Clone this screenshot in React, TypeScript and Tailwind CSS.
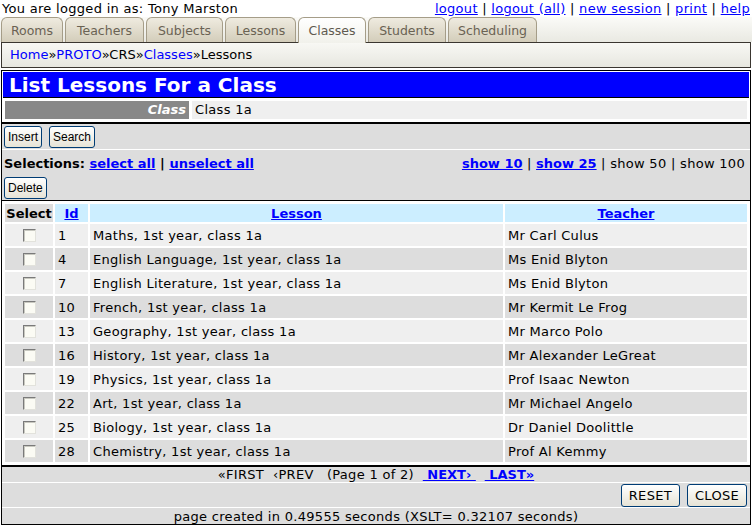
import React from "react";

const tabs = [
  { t: "Rooms", w: "w-[62px]" },
  { t: "Teachers", w: "w-[79px]" },
  { t: "Subjects", w: "w-[77px]" },
  { t: "Lessons", w: "w-[71px]" },
  { t: "Classes", w: "w-[68px]" },
  { t: "Students", w: "w-[78px]" },
  { t: "Scheduling", w: "w-[89px]" },
];

const rows = [
  { id: 1, lesson: "Maths, 1st year, class 1a", teacher: "Mr Carl Culus" },
  { id: 4, lesson: "English Language, 1st year, class 1a", teacher: "Ms Enid Blyton" },
  { id: 7, lesson: "English Literature, 1st year, class 1a", teacher: "Ms Enid Blyton" },
  { id: 10, lesson: "French, 1st year, class 1a", teacher: "Mr Kermit Le Frog" },
  { id: 13, lesson: "Geography, 1st year, class 1a", teacher: "Mr Marco Polo" },
  { id: 16, lesson: "History, 1st year, class 1a", teacher: "Mr Alexander LeGreat" },
  { id: 19, lesson: "Physics, 1st year, class 1a", teacher: "Prof Isaac Newton" },
  { id: 22, lesson: "Art, 1st year, class 1a", teacher: "Mr Michael Angelo" },
  { id: 25, lesson: "Biology, 1st year, class 1a", teacher: "Dr Daniel Doolittle" },
  { id: 28, lesson: "Chemistry, 1st year, class 1a", teacher: "Prof Al Kemmy" },
];

function XpButton({ children, wide }: { children: React.ReactNode; wide?: boolean }) {
  return (
    <button
      className={
        wide
          ? "h-[23px] rounded-[3px] border border-[#003c74] bg-gradient-to-b from-white to-[#e6e3d6] px-[7px] text-[13px] text-black leading-none"
          : "h-[22px] rounded-[3px] border border-[#003c74] bg-gradient-to-b from-white to-[#e6e3d6] px-[3px] font-['Liberation_Sans',sans-serif] text-[12px] tracking-normal text-black leading-none"
      }
    >
      {children}
    </button>
  );
}

function Checkbox() {
  return (
    <div className="mx-auto h-[13px] w-[13px] border border-[#7a7a7a] border-b-[#e2e2dc] border-r-[#e2e2dc] bg-[#fbfbf4] shadow-[inset_1px_1px_0_#c8c8c0]" />
  );
}

const link = "text-[#0000ff] underline";
const boldLink = "font-bold tracking-normal text-[#0000ff] underline";

export default function App() {
  return (
    <div className="h-[527px] w-[752px] overflow-hidden bg-white font-['DejaVu_Sans',sans-serif] text-[13px] tracking-[0.3px] text-black">
      {/* top line */}
      <div className="flex h-[17px] items-center justify-between pl-[2px] pr-[2px] leading-none">
        <span>You are logged in as: Tony Marston</span>
        <span>
          <a className={link}>logout</a> | <a className={link}>logout (all)</a> | <a className={link}>new session</a> |{" "}
          <a className={link}>print</a> | <a className={link}>help</a>
        </span>
      </div>

      {/* tabs */}
      <div className="flex h-[25px] items-end gap-[2px] bg-gradient-to-b from-[#fbfbf8] to-[#e9e9e2] pl-[1px]">
        {tabs.map(({ t, w }) =>
          t === "Classes" ? (
            <div
              key={t}
              className={`relative z-10 -mb-[1px] h-[26px] ${w} rounded-t-[6px] border border-b-0 border-[#a59d88] bg-gradient-to-b from-white to-[#f1f1eb] pt-[4px] text-center text-[12.5px] tracking-normal text-[#5f5a50]`}
            >
              {t}
            </div>
          ) : (
            <div
              key={t}
              className={`h-[25px] ${w} rounded-t-[6px] border border-b-0 border-[#a59d88] bg-gradient-to-b from-[#efebe0] to-[#d3cdba] pt-[4px] text-center text-[12.5px] tracking-normal text-[#6a6253]`}
            >
              {t}
            </div>
          )
        )}
      </div>

      {/* breadcrumb */}
      <div className="mx-[1px] flex h-[26px] items-center border border-[#3a3630] bg-gradient-to-b from-[#f8f8f4] to-[#e7e7e0] pl-[8px] tracking-normal">
        <a className="text-[#0000ff]">Home</a>»<a className="text-[#0000ff]">PROTO</a>»CRS»<a className="text-[#0000ff]">Classes</a>»Lessons
      </div>

      {/* main box */}
      <div className="mx-[1px] mt-[2px] border border-black bg-white">
        <div className="px-[1px] pt-[1px]">
          <div className="flex h-[26px] items-center border-b border-black bg-[#0000ff] pl-[6px] text-[20px] font-bold leading-none tracking-normal text-white">
            List Lessons For a Class
          </div>
        </div>
        <div className="flex gap-[3px] px-[3px] pb-[3px] pt-[3px]">
          <div className="flex h-[18px] w-[184px] items-center justify-end bg-[#888888] pr-[3px] font-bold italic tracking-normal text-white">
            Class
          </div>
          <div className="flex h-[18px] flex-1 items-center bg-[#efefef] pl-[3px]">Class 1a</div>
        </div>

        <div className="border-t-2 border-black bg-[#dddddd]">
          <div className="flex h-[25px] items-center gap-[7px] pl-[2px]">
            <XpButton>Insert</XpButton>
            <XpButton>Search</XpButton>
          </div>
          <div className="border-t border-white pl-[2px] pr-[5px] pt-[6px]">
            <div className="flex h-[16px] items-center justify-between">
              <span>
                <b className="tracking-normal">Selections: </b>
                <a className={boldLink}>select all</a> <b>|</b> <a className={boldLink}>unselect all</a>
              </span>
              <span>
                <a className={boldLink}>show 10</a> | <a className={boldLink}>show 25</a> | show 50 | show 100
              </span>
            </div>
            <div className="mt-[5px] pb-[1px]">
              <XpButton>Delete</XpButton>
            </div>
          </div>

          <div className="border-y border-black bg-white p-[1px]">
            <table className="w-full border-separate border-spacing-[2px]">
              <thead>
                <tr className="h-[18px]">
                  <th className="w-[48px] bg-[#dddddd] p-0 text-center font-bold leading-none tracking-normal">Select</th>
                  <th className="w-[33px] bg-[#cceeff] p-0 leading-none">
                    <a className={boldLink}>Id</a>
                  </th>
                  <th className="w-[413px] bg-[#cceeff] p-0 leading-none">
                    <a className={boldLink}>Lesson</a>
                  </th>
                  <th className="bg-[#cceeff] p-0 leading-none">
                    <a className={boldLink}>Teacher</a>
                  </th>
                </tr>
              </thead>
              <tbody>
                {rows.map((r, i) => {
                  const bg = i % 2 === 0 ? "bg-[#efefef]" : "bg-[#dddddd]";
                  return (
                    <tr key={r.id} className="h-[22px]">
                      <td className={`${bg} p-0`}>
                        <Checkbox />
                      </td>
                      <td className={`${bg} pb-0 pl-[3px] pt-[2px]`}>{r.id}</td>
                      <td className={`${bg} pb-0 pl-[3px] pt-[2px]`}>{r.lesson}</td>
                      <td className={`${bg} pb-0 pl-[3px] pt-[2px]`}>{r.teacher}</td>
                    </tr>
                  );
                })}
              </tbody>
            </table>
          </div>

          <div className="flex h-[16px] items-center justify-center border-t border-black leading-none">
            «FIRST&nbsp; ‹PREV&nbsp;&nbsp; (Page 1 of 2)&nbsp;&nbsp;
            <a className={boldLink}>&nbsp;NEXT›&nbsp;</a>&nbsp;&nbsp;
            <a className={boldLink}>&nbsp;LAST»</a>
          </div>
          <div className="flex h-[25px] items-center justify-end gap-[7px] border-t border-white pr-[3px]">
            <XpButton wide>RESET</XpButton>
            <XpButton wide>CLOSE</XpButton>
          </div>
          <div className="flex h-[17px] items-center justify-center border-t border-white leading-none">
            page created in 0.49555 seconds (XSLT= 0.32107 seconds)
          </div>
        </div>
      </div>
    </div>
  );
}
